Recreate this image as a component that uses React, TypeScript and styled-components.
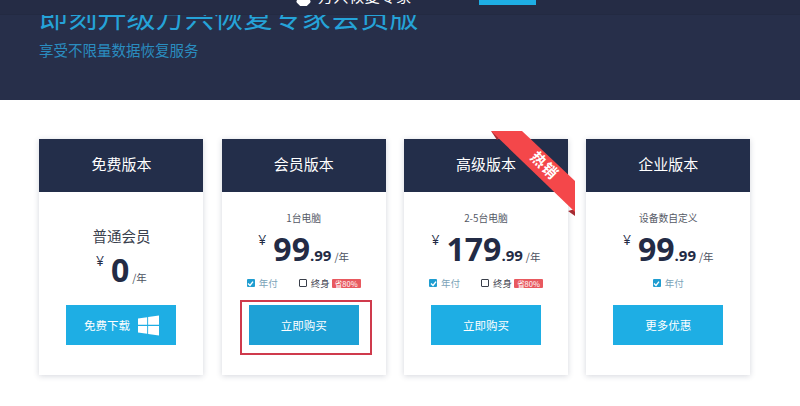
import { FC } from 'react';
import styled, { createGlobalStyle } from 'styled-components';

const CJK = `"Noto Sans CJK SC", "Open Sans", sans-serif`;

interface IPlan {
  title: string;
  device: string;
  big?: boolean;
  whole: string;
  cents?: string;
  lifetime?: boolean;
  monthly?: boolean;
  action: string;
  windows?: boolean;
  hot?: boolean;
  marked?: boolean;
}

const plans: IPlan[] = [
  { title: '免费版本', device: '普通会员', big: true, whole: '0', action: '免费下载', windows: true },
  { title: '会员版本', device: '1台电脑', whole: '99', cents: '.99', monthly: true, lifetime: true, action: '立即购买', marked: true },
  { title: '高级版本', device: '2-5台电脑', whole: '179', cents: '.99', monthly: true, lifetime: true, action: '立即购买', hot: true },
  { title: '企业版本', device: '设备数自定义', whole: '99', cents: '.99', monthly: true, action: '更多优惠' },
];

const WindowsIcon: FC = () => (
  <svg width="21" height="21" viewBox="0 0 22 21" fill="#fff" aria-hidden="true">
    <path d="M0 3.2 9.6 1.8v8H0zM10.6 1.6 22 0v9.8H10.6zM0 10.9h9.6v8.2L0 17.8zM10.6 10.9H22V21l-11.4-1.7z" />
  </svg>
);

const Ribbon: FC = () => (
  <RibbonWrap>
    <svg width="85" height="86" viewBox="0 0 85 86" aria-hidden="true">
      <path d="M0 0 6 9 10 6z" fill="#a52c33" />
      <path d="M77 80 84 85 84 78z" fill="#a52c33" />
      <path d="M0 0H31L84 50V81z" fill="#f4474a" />
    </svg>
    <RibbonText>热销</RibbonText>
  </RibbonWrap>
);

const Plan: FC<{ plan: IPlan }> = ({ plan }) => (
  <Card>
    <CardHead>{plan.title}</CardHead>
    {plan.hot && <Ribbon />}
    <CardBody>
      <Device $big={plan.big}>{plan.device}</Device>
      <Price $tight={plan.big}>
        <Yen>¥</Yen>
        <Whole>{plan.whole}</Whole>
        {plan.cents && <Cents>{plan.cents}</Cents>}
        <Per>/年</Per>
      </Price>
      {plan.monthly && (
        <Options>
          <Option $active>
            <Checked>
              <svg width="7" height="7" viewBox="0 0 7 7" fill="none" stroke="#fff" strokeWidth="1.4">
                <path d="M1 3.5 3 5.4 6 1.6" />
              </svg>
            </Checked>
            年付
          </Option>
          {plan.lifetime && (
            <Option>
              <Unchecked />
              终身
              <Badge>省80%</Badge>
            </Option>
          )}
        </Options>
      )}
      <Action $marked={plan.marked}>
        {plan.action}
        {plan.windows && <WindowsIcon />}
        {plan.marked && <Marker />}
      </Action>
    </CardBody>
  </Card>
);

const App: FC = () => (
  <>
    <GlobalStyle />
    <Hero>
      <TopBar>
        <Brand>
          <BrandMark />
          <BrandName>万兴恢复专家</BrandName>
        </Brand>
        <TopButton />
      </TopBar>
      <HeroTitle>即刻升级万兴恢复专家会员版</HeroTitle>
      <HeroSub>享受不限量数据恢复服务</HeroSub>
    </Hero>
    <Cards>
      {plans.map((plan) => (
        <Plan key={plan.title} plan={plan} />
      ))}
    </Cards>
  </>
);

export default App;

const GlobalStyle = createGlobalStyle`
  html, body {
    margin: 0;
    background: #fff;
  }

  body {
    font-family: ${CJK};
  }
`;

const Hero = styled.header`
  position: relative;
  box-sizing: border-box;
  height: 100px;
  padding: 1px 0 0 39px;
  background: #272f4a;
  overflow: hidden;
`;

const TopBar = styled.div`
  position: absolute;
  top: 0;
  left: 0;
  right: 0;
  height: 14px;
  padding-left: 296px;
  display: flex;
  background: #252c45;
  border-bottom: 1px solid #232a42;
`;

const Brand = styled.div`
  width: 183px;
  height: 6px;
  display: flex;
  align-items: flex-end;
  gap: 9px;
  overflow: hidden;
`;

const BrandMark = styled.span`
  flex: none;
  width: 11px;
  height: 11px;
  margin: 0 0 -1px 2px;
  background: #fff;
  transform: rotate(45deg);
  border-radius: 2px;
`;

const BrandName = styled.span`
  flex: none;
  color: #fff;
  font-size: 15px;
  line-height: 20px;
  letter-spacing: 0.6px;
`;

const TopButton = styled.span`
  width: 57px;
  height: 5px;
  background: #1eaee4;
`;

const HeroTitle = styled.h1`
  margin: 0;
  color: #25a3d8;
  font-size: 29px;
  font-weight: 400;
  line-height: 29px;
  letter-spacing: 0.2px;
`;

const HeroSub = styled.p`
  margin: 10px 0 0;
  color: #2a8dc0;
  font-size: 14.5px;
  line-height: 20px;
`;

const Cards = styled.main`
  box-sizing: border-box;
  height: 306px;
  display: flex;
  gap: 18.3px;
  padding: 39px 0 0 39.4px;
`;

const Card = styled.section`
  position: relative;
  width: 164px;
  height: 236px;
  display: flex;
  flex-direction: column;
  background: #fff;
  box-shadow: 0 1px 6px rgba(40, 50, 80, 0.2);
`;

const CardHead = styled.h2`
  flex: none;
  height: 53px;
  margin: 0;
  background: #232e4a;
  color: #fff;
  font-size: 15px;
  font-weight: 400;
  line-height: 49px;
  text-align: center;
`;

const RibbonWrap = styled.div`
  position: absolute;
  top: -8px;
  left: 87px;
  width: 85px;
  height: 86px;
`;

const RibbonText = styled.span`
  position: absolute;
  top: 24px;
  left: 38px;
  color: #fff;
  font-size: 15px;
  font-weight: 700;
  line-height: 20px;
  letter-spacing: 1px;
  transform: rotate(45deg);
`;

const CardBody = styled.div`
  flex: 1;
  display: flex;
  flex-direction: column;
  align-items: center;
  justify-content: flex-end;
  padding-bottom: 30px;
`;

const Device = styled.div<{ $big?: boolean }>`
  margin-bottom: 6px;
  color: ${(p) => (p.$big ? '#3a3f4d' : '#555a66')};
  font-size: ${(p) => (p.$big ? '14.5px' : '9.8px')};
  line-height: ${(p) => (p.$big ? '20px' : '14px')};
`;

const Price = styled.div<{ $tight?: boolean }>`
  display: flex;
  align-items: baseline;
  height: 36px;
  margin-bottom: ${(p) => (p.$tight ? '17px' : '9px')};
  color: #232b45;
`;

const Yen = styled.span`
  margin-right: 7px;
  font-family: 'Open Sans', sans-serif;
  font-size: 14px;
  position: relative;
  top: -16px;
`;

const Whole = styled.span`
  font-family: 'Open Sans', sans-serif;
  font-size: 32px;
  font-weight: 700;
  line-height: 36px;
`;

const Cents = styled.span`
  font-family: 'Open Sans', sans-serif;
  font-size: 15px;
  font-weight: 700;
`;

const Per = styled.span`
  margin-left: 3px;
  color: #4b5160;
  font-size: 10.5px;
`;

const Options = styled.div`
  display: flex;
  gap: 21px;
  height: 14px;
  margin-bottom: 15px;
`;

const Option = styled.div<{ $active?: boolean }>`
  display: flex;
  align-items: center;
  gap: 4px;
  color: ${(p) => (p.$active ? '#7ba3b8' : '#3f4450')};
  font-size: 9.5px;
  line-height: 14px;
`;

const Checked = styled.span`
  width: 8px;
  height: 8px;
  display: flex;
  align-items: center;
  justify-content: center;
  background: #1f9dd0;
  border-radius: 1px;
`;

const Unchecked = styled.span`
  box-sizing: border-box;
  width: 8px;
  height: 8px;
  border: 1px solid #3a3f4a;
  border-radius: 1px;
`;

const Badge = styled.span`
  margin-left: -2px;
  padding: 0 3px;
  background: #e8595f;
  color: #fff;
  font-size: 7.5px;
  line-height: 9px;
  border-radius: 1px;
`;

const Action = styled.button<{ $marked?: boolean }>`
  position: relative;
  flex: none;
  width: 110px;
  height: 40px;
  display: flex;
  align-items: center;
  justify-content: center;
  gap: 8px;
  padding: 0;
  border: 0;
  background: ${(p) => (p.$marked ? '#1ea1d6' : '#1eaee4')};
  color: #fff;
  font-family: ${CJK};
  font-size: 11.5px;
`;

const Marker = styled.span`
  position: absolute;
  top: -5px;
  left: -9px;
  width: 128px;
  height: 51px;
  border: 2px solid #cf3a4c;
`;
